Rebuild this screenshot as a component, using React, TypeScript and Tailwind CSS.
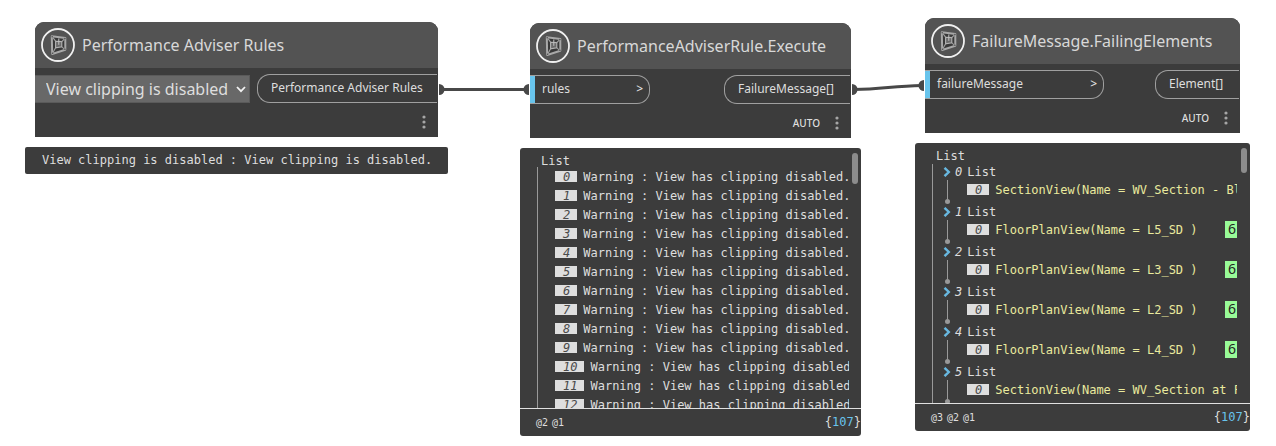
import type { ReactNode } from "react";

const SANS = "font-['Noto_Sans','Open_Sans',sans-serif]";
const MONO = "font-['DejaVu_Sans_Mono','Liberation_Mono',monospace]";

function NodeIcon() {
  return (
    <svg viewBox="0 0 34 34" className="size-[34px] shrink-0" fill="none" aria-hidden="true">
      <circle cx="17" cy="17" r="16" stroke="#f0f0f0" strokeWidth="1.8" />
      <path d="M10.8 8.2 L24.3 10 V21.8 L11.2 26 Z" fill="#383838" stroke="#a8a8a8" strokeWidth="2" strokeLinejoin="round" />
      <path d="M14.6 13.2 L20.8 13.6 V18.8 L14.6 19.8 Z" fill="#6a6a6a" stroke="#b4b4b4" strokeWidth="1.1" />
      <path d="M10.8 8.2 L14.6 13.2 M24.3 10 L20.8 13.6 M24.3 21.8 L20.8 18.8 M11.2 26 L14.6 19.8" stroke="#a0a0a0" strokeWidth="1.1" />
      <path d="M17.8 10.5 V16.8" stroke="#c4c4c4" strokeWidth="1" />
      <g fill="#505050">
        <circle cx="11.2" cy="8.8" r="0.8" />
        <circle cx="23.9" cy="10.6" r="0.8" />
        <circle cx="23.9" cy="21.3" r="0.8" />
        <circle cx="11.6" cy="25.3" r="0.8" />
      </g>
    </svg>
  );
}

function MenuButton() {
  return (
    <button type="button" aria-label="Node options" className="flex h-4 w-2 items-center justify-center">
      <svg viewBox="0 0 4 14" className="h-[14px] w-1" fill="#a6a6a6">
        <circle cx="2" cy="2" r="1.6" />
        <circle cx="2" cy="7" r="1.6" />
        <circle cx="2" cy="12" r="1.6" />
      </svg>
    </button>
  );
}

function InputPort({ name, width }: { name: string; width: string }) {
  return (
    <div className={`flex h-[29px] items-center justify-between rounded-r-[13px] border border-l-0 border-[#a0a0a0] pr-[6px] text-[12px] ${width}`}>
      <span className="flex h-full items-center gap-[7px]">
        <span className="h-full w-[5px] bg-[#68c4ec]" />
        <span className="pb-[2px]">{name}</span>
      </span>
      <span className="pb-[2px] font-medium">&gt;</span>
    </div>
  );
}

function OutputPort({ name, width }: { name: string; width: string }) {
  return (
    <div className={`mr-px flex h-[29px] items-center rounded-l-[13px] border border-r-0 border-[#a0a0a0] pb-[2px] pl-[13px] text-[12px] whitespace-nowrap ${width}`}>
      {name}
    </div>
  );
}

function GraphNode({ title, ports, auto = false }: { title: string; ports: ReactNode; auto?: boolean }) {
  return (
    <section className="mx-[10px] overflow-hidden rounded-t-[9px] bg-[#3c3c3c] text-[#dedede]">
      <header className="flex h-[46px] items-center gap-[7px] bg-[#535353] pl-[6px] text-[#d8d8d8]">
        <NodeIcon />
        <h2 className="text-[16px] whitespace-nowrap">{title}</h2>
      </header>
      <div className="flex items-center justify-between pt-[6px]">{ports}</div>
      <div className="flex h-[34px] items-center justify-end gap-[13px] pt-1 pr-[10px] text-[10px] font-medium">
        {auto && <span>AUTO</span>}
        <MenuButton />
      </div>
    </section>
  );
}

function Preview({ levels, children, thumb, clip }: { levels: string[]; children: ReactNode; thumb: string; clip: string }) {
  return (
    <section className={`relative mt-[10px] rounded-[3px] bg-[#3c3c3c] text-[12px] text-[#dedede] ${MONO}`}>
      <div className={`h-[260px] overflow-hidden pt-[5px] pb-px pl-[17px] ${clip}`}>
        <p className="pl-1 leading-4">List</p>
        <div className="border-l border-[#999999]">{children}</div>
      </div>
      <footer className="flex h-7 items-center justify-between border-t border-[#e0e0e0] pl-4">
        <span className="flex gap-1 text-[10px]">
          {levels.map((level) => (
            <span key={level}>{level}</span>
          ))}
        </span>
        <span className="pb-[2px]">
          {"{"}
          <span className="text-[#68c4ec]">107</span>
          {"}"}
        </span>
      </footer>
      <div className={`absolute top-[5px] w-[6px] rounded-full bg-[#8c8c8c] ${thumb}`} />
    </section>
  );
}

function IndexBadge({ value }: { value: number }) {
  return (
    <span className="h-[11px] shrink-0 bg-[#dedede] pr-[7px] pl-2 text-[12px] leading-[12px] text-[#4a4a4a] italic">{value}</span>
  );
}

const warnings = Array.from({ length: 13 }, (_, i) => i);

const elements = [
  { text: "SectionView(Name = WV_Section - Bl", id: "" },
  { text: "FloorPlanView(Name = L5_SD )", id: "6" },
  { text: "FloorPlanView(Name = L3_SD )", id: "6" },
  { text: "FloorPlanView(Name = L2_SD )", id: "6" },
  { text: "FloorPlanView(Name = L4_SD )", id: "6" },
  { text: "SectionView(Name = WV_Section at F", id: "" },
];

function ElementGroup({ index, text, id }: { index: number; text: string; id: string }) {
  return (
    <li className="flex h-10">
      <div className="flex w-[28px] shrink-0 flex-col items-center">
        <button type="button" aria-label={`Collapse list ${index}`} className="flex h-4 items-center">
          <svg viewBox="0 0 8 10" className="h-[10px] w-2" fill="none" stroke="#68b8e0" strokeWidth="2.4">
            <path d="M1.5 0.8 L5.8 5 L1.5 9.2" />
          </svg>
        </button>
        <span className="w-px grow bg-[#999999]" />
        <span className="size-[5px] rounded-full bg-[#999999]" />
      </div>
      <div className="-ml-[6px] flex min-w-0 grow flex-col">
        <p className="flex h-[15px] items-center gap-[5px]">
          <span className="italic">{index}</span>
          <span>List</span>
        </p>
        <div className="flex h-[21px] items-center gap-[6px] pl-3 whitespace-nowrap text-[#eaea9e]">
          <IndexBadge value={0} />
          <span className="grow">{text}</span>
          {id && (
            <span className={`h-[17px] w-3 bg-[#98fb98] pl-[3px] text-[14px] leading-[15px] text-[#222222] ${SANS}`}>{id}</span>
          )}
        </div>
      </div>
    </li>
  );
}

export default function App() {
  return (
    <main className={`relative h-screen overflow-hidden bg-white ${SANS}`}>
      <svg className="absolute inset-0 size-full" fill="none" aria-hidden="true">
        <g stroke="#484848" strokeWidth="3">
          <path d="M441 89.5 H528" />
          <path d="M854 89.5 C882 89.5 892 86 922 85.5" />
        </g>
        <g fill="#484848">
          <path d="M439 84 A5.5 5.5 0 0 1 439 95 Z" />
          <path d="M529 84 A5.5 5.5 0 0 0 529 95 Z" />
          <path d="M852 84 A5.5 5.5 0 0 1 852 95 Z" />
          <path d="M924 80 A5.5 5.5 0 0 0 924 91 Z" />
        </g>
      </svg>

      <div className="absolute top-[22px] left-[25px] w-[423px]">
        <GraphNode
          title="Performance Adviser Rules"
          ports={
            <>
              <div className="relative">
                <select
                  aria-label="Rule"
                  className="h-[28px] w-[215px] appearance-none border border-l-0 border-[#5a5a5a] bg-[#686868] pl-[11px] text-[16px] text-[#dedede]"
                >
                  <option>View clipping is disabled</option>
                </select>
                <svg viewBox="0 0 10 7" className="pointer-events-none absolute top-[11px] right-[4px] h-[7px] w-[10px]" fill="none" stroke="#f2f2f2" strokeWidth="1.8">
                  <path d="M1 1 L5 5.2 L9 1" />
                </svg>
              </div>
              <OutputPort name="Performance Adviser Rules" width="w-[180px]" />
            </>
          }
        />
        <p className={`mt-[10px] rounded-[2px] bg-[#3c3c3c] pl-[17px] text-[12px] leading-[27px] text-[#dedede] ${MONO}`}>
          View clipping is disabled : View clipping is disabled.
        </p>
      </div>

      <div className="absolute top-[23px] left-[520px] w-[341px]">
        <GraphNode
          auto
          title="PerformanceAdviserRule.Execute"
          ports={
            <>
              <InputPort name="rules" width="w-[120px]" />
              <OutputPort name="FailureMessage[]" width="w-[126px]" />
            </>
          }
        />
        <Preview levels={["@2", "@1"]} thumb="right-[3px] h-[31px]" clip="pr-[10px]">
          <ul className="pl-[17px]">
            {warnings.map((n) => (
              <li key={n} className={`-mt-[2px] mb-[2px] flex h-[19px] items-center gap-[6px] overflow-hidden whitespace-nowrap ${n > 9 ? "pr-[2px]" : ""}`}>
                <IndexBadge value={n} />
                <span className="min-w-0 overflow-hidden">Warning : View has clipping disabled{n < 10 && "."}</span>
              </li>
            ))}
          </ul>
        </Preview>
      </div>

      <div className="absolute top-[18px] left-[915px] w-[335px]">
        <GraphNode
          auto
          title="FailureMessage.FailingElements"
          ports={
            <>
              <InputPort name="failureMessage" width="w-[179px]" />
              <OutputPort name="Element[]" width="w-[84px]" />
            </>
          }
        />
        <Preview levels={["@3", "@2", "@1"]} thumb="right-[3px] h-[25px]" clip="pr-[13px]">
          <ul className="overflow-hidden">
            {elements.map((element, index) => (
              <ElementGroup key={index} index={index} text={element.text} id={element.id} />
            ))}
          </ul>
        </Preview>
      </div>
    </main>
  );
}
